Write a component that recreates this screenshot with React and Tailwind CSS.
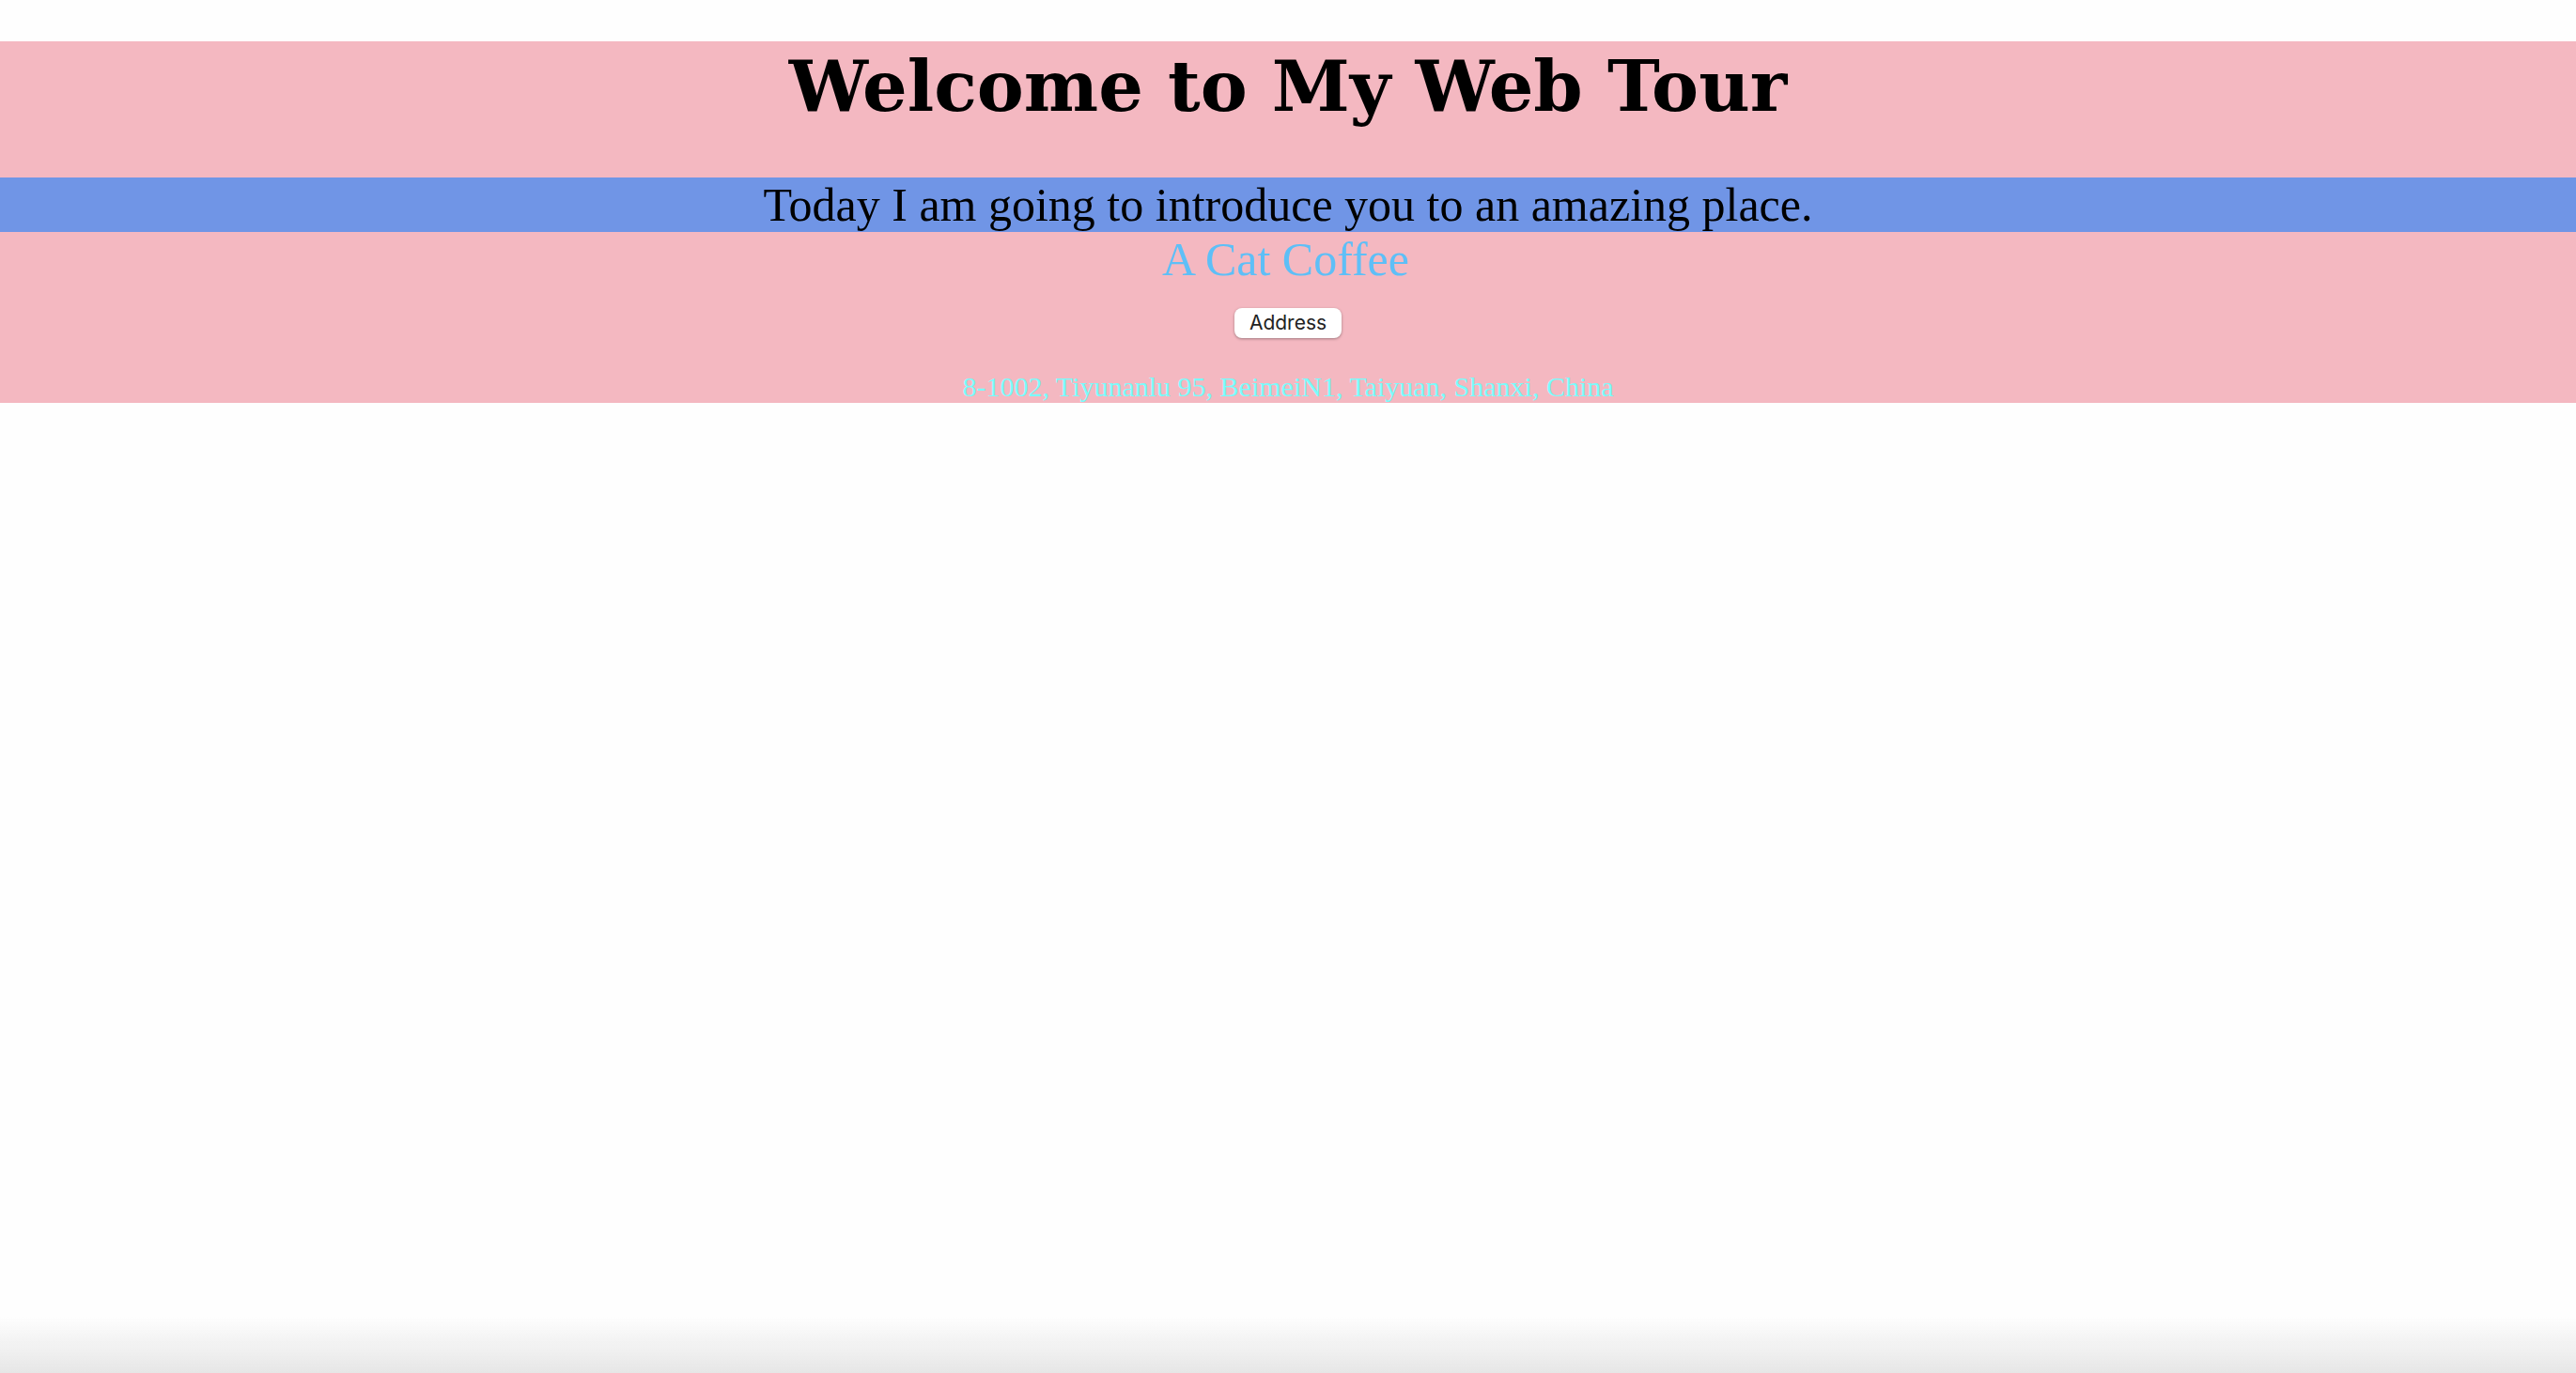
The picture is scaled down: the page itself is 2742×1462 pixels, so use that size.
import React from "react";

const App = () => {
  return (
    <div className="relative min-h-screen bg-[#fefefe] pt-[44px]">
      <div className="flex flex-col items-center bg-[#f4b8c1]">
        {/* Title */}
        <h1 className="mt-[5px] mb-[54px] text-[75px] leading-[86px] font-bold text-black whitespace-nowrap [font-family:'DejaVu_Serif',Georgia,serif]">
          Welcome to My Web Tour
        </h1>

        {/* Intro band */}
        <p className="w-full h-[58px] bg-[#7095e6] text-center text-[50px] leading-[58px] text-black whitespace-nowrap [font-family:'Liberation_Serif','Times_New_Roman',serif]">
          Today I am going to introduce you to an amazing place.
        </p>

        <h2 className="mr-[5px] text-[50px] leading-[58px] text-[#5ebff7] whitespace-nowrap [font-family:'Liberation_Serif','Times_New_Roman',serif]">
          A Cat Coffee
        </h2>

        <button className="mt-[23px] h-[32px] w-[114px] rounded-[8px] bg-white text-[21px] text-[#222] shadow-[0_1px_3px_rgba(0,0,0,0.35)] [font-family:Inter,'Liberation_Sans',sans-serif]">
          Address
        </button>

        <p className="mt-[34px] text-[30px] leading-[35px] text-[#7afcfc] whitespace-nowrap [font-family:'Liberation_Serif','Times_New_Roman',serif]">
          8-1002, Tiyunanlu 95, BeimeiN1, Taiyuan, Shanxi, China
        </p>
      </div>

      {/* window bottom shade */}
      <div className="pointer-events-none fixed bottom-0 left-0 right-0 h-[60px] bg-gradient-to-b from-transparent to-[#e6e6e6]" />
    </div>
  );
};

export default App;
